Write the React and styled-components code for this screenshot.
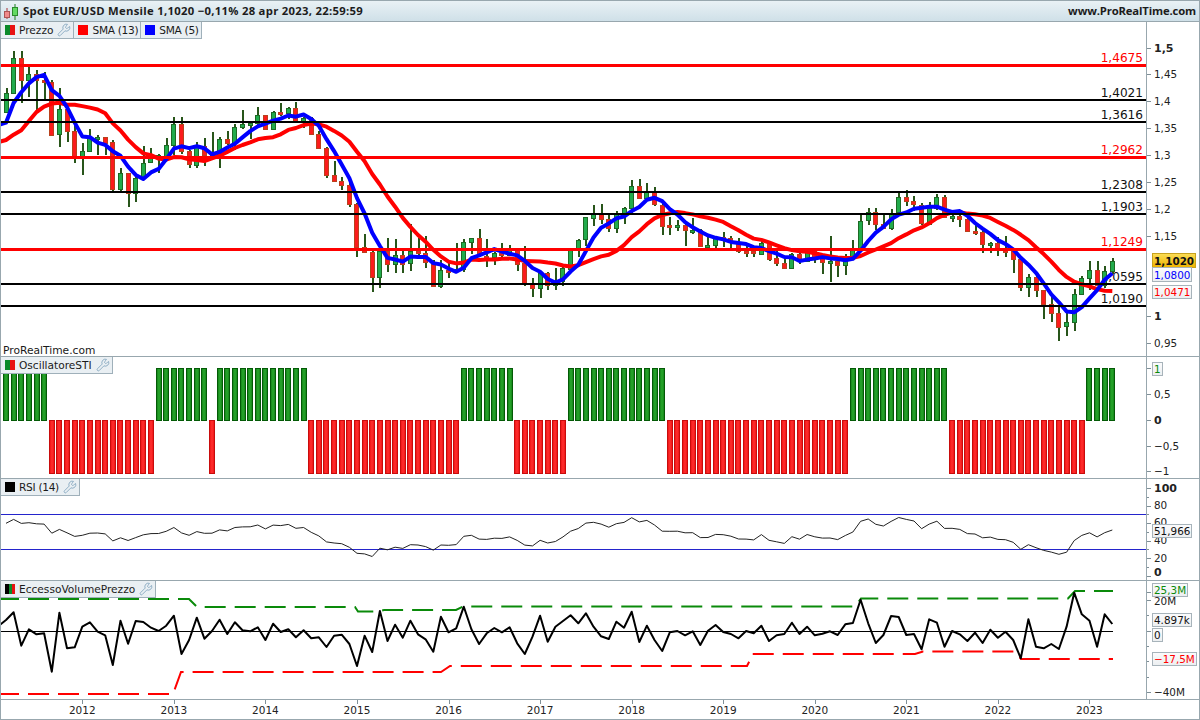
import React from "react";
import styled, { createGlobalStyle } from "styled-components";
import { Wrench } from "lucide-react";

const GlobalStyle = createGlobalStyle`
  html, body { margin: 0; padding: 0; background: #fff; overflow: hidden; }
  #root { width: 1200px; height: 720px; }
`;

const FONT = `"DejaVu Sans", "Liberation Sans", sans-serif`;
const TITLE_FONT = `"Open Sans", "DejaVu Sans", sans-serif`;
const BORDER = "#98a7ae";

/* ---------- market data (monthly, Mar 2011 → Apr 2023) ---------- */
const PRIOR = [1.28, 1.267, 1.325, 1.323, 1.415, 1.403, 1.426, 1.434, 1.464, 1.472, 1.5, 1.432,
  1.3866, 1.363, 1.351, 1.3295, 1.227, 1.2235, 1.305, 1.268, 1.363, 1.394, 1.298, 1.338, 1.369, 1.38];
const OHLC = [
  [1.4158,1.425,1.386],[1.4807,1.494,1.415],[1.439,1.494,1.397],[1.4502,1.47,1.407],[1.4394,1.458,1.384],[1.4365,1.455,1.405],[1.3387,1.439,1.336],[1.3855,1.425,1.315],[1.3445,1.387,1.324],[1.2961,1.355,1.286],
  [1.308,1.323,1.262],[1.3315,1.349,1.306],[1.3342,1.338,1.3],[1.3237,1.328,1.3],[1.2367,1.328,1.233],[1.2667,1.275,1.229],[1.23,1.239,1.204],[1.2578,1.262,1.213],[1.2859,1.317,1.256],[1.2977,1.313,1.288],[1.2991,1.301,1.266],[1.3193,1.331,1.293],
  [1.3578,1.371,1.3],[1.3067,1.371,1.302],[1.2817,1.31,1.275],[1.3168,1.324,1.275],[1.2996,1.331,1.279],[1.3008,1.342,1.295],[1.3301,1.334,1.275],[1.3222,1.345,1.319],[1.3525,1.357,1.31],[1.3582,1.383,1.348],[1.3589,1.36,1.329],[1.3743,1.389,1.353],
  [1.3486,1.374,1.348],[1.3802,1.382,1.348],[1.3769,1.396,1.373],[1.387,1.39,1.367],[1.3633,1.399,1.359],[1.3692,1.37,1.35],[1.3388,1.37,1.337],[1.3133,1.344,1.313],[1.2628,1.314,1.257],[1.2524,1.289,1.25],[1.2451,1.26,1.235],[1.2097,1.257,1.203],
  [1.129,1.21,1.11],[1.1197,1.153,1.126],[1.0731,1.124,1.046],[1.1222,1.129,1.052],[1.0986,1.146,1.082],[1.1146,1.144,1.081],[1.0985,1.122,1.081],[1.1211,1.171,1.085],[1.1177,1.146,1.109],[1.1003,1.149,1.089],[1.0565,1.104,1.056],[1.0862,1.105,1.052],
  [1.0831,1.099,1.071],[1.0873,1.137,1.081],[1.138,1.144,1.082],[1.1453,1.146,1.115],[1.113,1.162,1.11],[1.1105,1.143,1.091],[1.1175,1.119,1.095],[1.1157,1.136,1.105],[1.1241,1.132,1.112],[1.0984,1.124,1.085],[1.0591,1.13,1.057],[1.0517,1.071,1.035],
  [1.0798,1.082,1.034],[1.0574,1.083,1.049],[1.0652,1.09,1.049],[1.0895,1.095,1.057],[1.1241,1.126,1.084],[1.1426,1.144,1.111],[1.1842,1.185,1.131],[1.191,1.207,1.168],[1.1813,1.209,1.172],[1.1646,1.188,1.157],[1.1901,1.196,1.155],[1.2005,1.203,1.172],
  [1.2414,1.254,1.192],[1.2193,1.256,1.219],[1.2324,1.247,1.215],[1.2079,1.241,1.205],[1.1692,1.21,1.151],[1.1684,1.185,1.151],[1.169,1.179,1.158],[1.16,1.173,1.13],[1.1604,1.182,1.153],[1.1313,1.163,1.13],[1.1317,1.15,1.121],[1.1466,1.148,1.127],
  [1.1447,1.157,1.129],[1.1371,1.149,1.123],[1.1217,1.145,1.118],[1.1215,1.133,1.111],[1.117,1.126,1.111],[1.137,1.141,1.116],[1.1077,1.128,1.102],[1.0991,1.125,1.093],[1.0899,1.111,1.088],[1.1151,1.118,1.088],[1.1018,1.118,1.098],[1.1212,1.124,1.103],
  [1.1093,1.124,1.1],[1.1027,1.11,1.078],[1.103,1.15,1.064],[1.0954,1.102,1.073],[1.11,1.115,1.077],[1.1234,1.142,1.11],[1.1778,1.191,1.119],[1.1936,1.201,1.17],[1.172,1.201,1.161],[1.1646,1.188,1.162],[1.193,1.2,1.16],[1.2216,1.231,1.193],
  [1.2136,1.235,1.205],[1.2075,1.224,1.195],[1.1731,1.211,1.17],[1.202,1.212,1.17],[1.2227,1.227,1.198],[1.1858,1.225,1.185],[1.1869,1.189,1.175],[1.1809,1.191,1.166],[1.158,1.191,1.156],[1.1559,1.169,1.152],[1.1338,1.161,1.118],[1.1372,1.138,1.118],
  [1.1235,1.148,1.112],[1.1218,1.15,1.11],[1.1067,1.118,1.08],[1.0545,1.108,1.047],[1.0732,1.079,1.035],[1.0483,1.077,1.036],[1.0225,1.049,.995],[1.0055,1.037,.99],[.9802,1.02,.954],[.9884,1.009,.963],[1.0406,1.05,.973],[1.0705,1.074,1.039],
  [1.0863,1.103,1.048],[1.0577,1.103,1.058],[1.0839,1.093,1.052],[1.102,1.108,1.079],
];
const CLOSES = [...PRIOR, ...OHLC.map((r) => r[0])];
const OFFSET = PRIOR.length;

const monthX = (i) => 6 + 7.63 * i;
const priceY = (p) => 47.5 + (1.5 - p) * 537.5;
const rsiY = (v) => 575.5 - 0.875 * v;

const sma = (n) => {
  const pts = [];
  for (let k = OFFSET - 1; k < CLOSES.length; k++) {
    const avg = CLOSES.slice(k - n + 1, k + 1).reduce((a, b) => a + b, 0) / n;
    pts.push(`${monthX(k - OFFSET).toFixed(1)},${priceY(avg).toFixed(1)}`);
  }
  return pts.join(" ");
};

const rsiPoints = () => {
  let up = 0, down = 0;
  const pts = [];
  for (let k = 1; k < CLOSES.length; k++) {
    const d = CLOSES[k] - CLOSES[k - 1];
    const u = Math.max(d, 0), l = Math.max(-d, 0);
    if (k <= 14) { up += u / 14; down += l / 14; }
    else { up = (up * 13 + u) / 14; down = (down * 13 + l) / 14; }
    if (k >= OFFSET) {
      const v = 100 - 100 / (1 + up / (down || 1e-6));
      pts.push(`${monthX(k - OFFSET).toFixed(1)},${rsiY(v).toFixed(1)}`);
    }
  }
  return pts.join(" ");
};

const LEVELS = [
  ["1,4675", 1.4675, true], ["1,4021", 1.4021], ["1,3616", 1.3616], ["1,2962", 1.2962, true],
  ["1,2308", 1.2308], ["1,1903", 1.1903], ["1,1249", 1.1249, true], ["1,0595", 1.0595], ["1,0190", 1.019],
];

/* oscillator sign runs: [firstIndex, lastIndex, up] */
const OSC = [[0,5,1],[6,19,0],[20,26,1],[27,27,0],[28,39,1],[40,59,0],[60,66,1],[67,73,0],[74,86,1],[87,110,0],[111,123,1],[124,141,0],[142,145,1]];

/* volume excess line: page y for each month, from Feb 2011 */
const z5 = [288,270,247,347,298,313,310,425,248,355,352,290,277,305,316,405,272,341,273,276,293,303,287,257,372,330,263,326,303,269,312,277,301,304,292,330,281,306,298,322,301,325,322,351,317,314,342,408,317,366,243,333,284];
const z7 = [383,332,373,388,425,320,367,355,290,358,402,370,354,367,352,400,432,380,317,395,350,333,316,340,310,350,379,387,335,353,305,396,347,390,423,367,363,376,364,405,362,345,366,372,385,363,370,347,393,376,372,338,372];
const z11 = [125,151,146,139,150,118,114,44,115,174,150,93,96,150,147,193,103,113,185,138,148,168,143,174,134,158];
const z6 = [845,870,925,808,890,895,882,897,830,728,793,812,890,793,822];
const VOL = [...z5.map((v) => 530 + v / 3), ...z7.map((v) => 510 + v / 3), ...z11.map((v) => 585 + v / 3), ...z6.map((v) => 350 + v / 3)]
  .map((y, i) => `${monthX(i - 1).toFixed(1)},${y.toFixed(1)}`).join(" ");

const GREEN_BAND = "-2,599 189,599 197,607 355,607 358,611.5 378,611.5 384,610 456,610 463,606.5 855,606.5 861,598.5 1068,598.5 1075,591 1113,591";
const RED_BAND = "-2,694 173,694 181,672 441,672 450,666 747,666 750,660 752,654 915,654 923,651.5 1015,651.5 1021,659 1113,659";

const YEARS = [2012,2013,2014,2015,2016,2017,2018,2019,2020,2021,2022,2023];

const PRICE_TICKS = [["1,5",1.5,1],["1,45",1.45],["1,4",1.4],["1,35",1.35],["1,3",1.3],["1,25",1.25],["1,2",1.2],["1,15",1.15],["1",1,1],["0,95",.95]];

/* ---------- layout ---------- */
const Window = styled.div`
  box-sizing: border-box;
  width: 1200px;
  height: 720px;
  display: flex;
  flex-direction: column;
  border: 1px solid ${BORDER};
  background: #fff;
  font-family: ${FONT};
  color: #111;
`;
const TitleBar = styled.header`
  flex: 0 0 21px;
  box-sizing: border-box;
  display: flex;
  align-items: center;
  justify-content: space-between;
  padding: 0 3px 1px 2px;
  background: linear-gradient(#e9f1f5, #cfe0e8);
  border-bottom: 1px solid ${BORDER};
`;
const TitleLeft = styled.div`
  display: flex;
  align-items: center;
  gap: 4px;
`;
const TitleText = styled.span`
  font-family: ${TITLE_FONT};
  font-size: 11.3px;
  font-weight: 700;
  letter-spacing: ${(p) => p.$spacing};
  color: #1c1c1c;
  white-space: nowrap;
`;
const Panel = styled.section`
  position: relative;
  flex: 0 0 ${(p) => p.$height}px;
  box-sizing: border-box;
  display: flex;
  border-bottom: 1px solid ${BORDER};
  overflow: hidden;
`;
const Plot = styled.div`
  flex: 0 0 1145px;
  display: flex;
`;
const Scale = styled.div`
  flex: 1;
  display: flex;
  border-left: 1px solid ${BORDER};
`;
const Chart = styled.svg`
  display: block;
  width: 100%;
  height: 100%;
`;
const Legend = styled.div`
  position: absolute;
  left: 0;
  top: 0;
  display: flex;
  z-index: 2;
`;
const LegendItem = styled.div`
  box-sizing: border-box;
  height: 17px;
  display: flex;
  align-items: center;
  gap: 4px;
  padding: 0 2px 0 4px;
  background: #e9eff3;
  border-right: 1px solid #9fb0ba;
  border-bottom: 1px solid #9fb0ba;
  font-size: 10.6px;
  letter-spacing: ${(p) => (p.$tight ? "-0.3px" : "0")};
  color: #1a1a1a;
  white-space: nowrap;
`;
const Swatch = styled.span`
  flex: 0 0 10px;
  height: 10px;
  background: ${(p) => p.$fill};
`;
const ProLabel = styled.div`
  position: absolute;
  left: 2px;
  bottom: -1px;
  font-size: 10.7px;
  line-height: 13px;
  color: #1a1a1a;
`;
const Tag = styled.div`
  position: absolute;
  top: ${(p) => p.$top}px;
  left: 1151px;
  box-sizing: border-box;
  height: ${(p) => p.$height || 14}px;
  padding: 0 1px;
  display: flex;
  align-items: center;
  font-size: 10.4px;
  font-weight: ${(p) => (p.$gold ? 700 : 400)};
  color: ${(p) => p.$color || "#111"};
  background: ${(p) => (p.$gold ? "linear-gradient(#fbdc55, #efb400)" : "linear-gradient(#fbfbfc, #eceff1)")};
  border: 1px solid ${(p) => (p.$gold ? "#c8a21e" : "#a7b3ba")};
  white-space: nowrap;
`;
const TimeAxis = styled.footer`
  flex: 0 0 19px;
  display: flex;
`;

/* ---------- svg parts ---------- */
const LevelText = styled.text`
  font-family: ${FONT};
  font-size: 12.1px;
  text-anchor: end;
  fill: ${(p) => (p.$red ? "#f00" : "#111")};
`;
const AxisText = styled.text`
  font-family: ${FONT};
  font-size: ${(p) => (p.$bold ? 11 : 10.4)}px;
  font-weight: ${(p) => (p.$bold ? 700 : 400)};
  fill: #222;
`;
const YearText = styled.text`
  font-family: ${FONT};
  font-size: 10.5px;
  text-anchor: middle;
  fill: #222;
`;

const Candles = () => (
  <g shapeRendering="crispEdges">
    {OHLC.map(([c, h, l], i) => {
      const o = CLOSES[OFFSET + i - 1];
      const up = c >= o;
      const left = Math.round(monthX(i) - 2.5);
      const top = priceY(Math.max(o, c));
      const bottom = priceY(Math.min(o, c));
      return (
        <g key={i}>
          <rect x={left + 1.5} y={priceY(Math.max(h, o, c))} width="2" height={priceY(Math.min(l, o, c)) - priceY(Math.max(h, o, c))} fill="#28551a" />
          <rect x={left + 0.5} y={Math.round(top) + 0.5} width="4" height={Math.max(Math.round(bottom - top), 2)} fill={up ? "#22ab4c" : "#fb1c1c"} stroke={up ? "#1d6a24" : "#b9411c"} />
        </g>
      );
    })}
  </g>
);

const Levels = () => (
  <g shapeRendering="crispEdges">
    {LEVELS.map(([, p, red]) => {
      const y = Math.round(priceY(p));
      return <rect key={p} x="0" y={y - 1} width="1146" height={red ? 3 : 2} fill={red ? "#f00" : "#000"} />;
    })}
  </g>
);

const Ticks = ({ ys, minor = [] }) => (
  <g shapeRendering="crispEdges" fill="#7f8f97">
    {ys.map((y) => <rect key={y} x="1147" y={Math.round(y)} width="4" height="1" />)}
    {minor.map((y) => <rect key={y} x="1147" y={Math.round(y)} width="2" height="1" />)}
  </g>
);

const Tool = () => <Wrench size={14} color="#6f97b5" strokeWidth={1.25} />;
const PV = "linear-gradient(90deg, #0a8a2a 50%, #e81212 50%)";

const Logo = () => (
  <svg width="16" height="18" viewBox="0 0 16 18">
    <rect x="3.5" y="6" width="1" height="11" fill="#a33" />
    <rect x="1.5" y="9.5" width="5" height="6" fill="#f08a8a" stroke="#a55" />
    <rect x="11.5" y="2" width="1" height="16" fill="#1d7a1d" />
    <rect x="9.5" y="5.5" width="5" height="8" fill="#62da62" stroke="#2b8a2b" />
  </svg>
);

const Bars = () => (
  <>
    <defs>
      <linearGradient id="barG" x1="0" x2="1" y1="0" y2="0">
        <stop offset="0" stopColor="#127d16" /><stop offset=".5" stopColor="#28a82c" /><stop offset="1" stopColor="#127d16" />
      </linearGradient>
      <linearGradient id="barR" x1="0" x2="1" y1="0" y2="0">
        <stop offset="0" stopColor="#ee1010" /><stop offset=".5" stopColor="#ff3030" /><stop offset="1" stopColor="#ee1010" />
      </linearGradient>
    </defs>
    <g shapeRendering="crispEdges">
      {OSC.flatMap(([a, b, up]) =>
        Array.from({ length: b - a + 1 }, (_, k) => {
          const i = a + k;
          const x = Math.round(monthX(i) - 3) + 0.5;
          return up ? (
            <rect key={i} x={x} y="368.5" width="5" height="52" fill="url(#barG)" stroke="#035a06" />
          ) : (
            <rect key={i} x={x} y="420.5" width="5" height="53" fill="url(#barR)" stroke="#c80c0c" />
          );
        })
      )}
    </g>
  </>
);

export default function App() {
  return (
    <>
      <GlobalStyle />
      <Window>
        <TitleBar>
          <TitleLeft>
            <Logo />
            <TitleText $spacing="0.29px">Spot EUR/USD Mensile 1,1020 −0,11% 28 apr 2023, 22:59:59</TitleText>
          </TitleLeft>
          <TitleText $spacing="-0.15px">www.ProRealTime.com</TitleText>
        </TitleBar>

        {/* price */}
        <Panel $height={335}>
          <Plot>
            <Chart viewBox="1 22 1145 334">
              {LEVELS.map(([t, p, red]) => (
                <LevelText key={t} x="1143" y={Math.round(priceY(p)) - 3} $red={red}>{t}</LevelText>
              ))}
              <Candles />
              <polyline points={sma(13)} fill="none" stroke="#f00" strokeWidth="4" strokeLinejoin="round" strokeLinecap="butt" />
              <polyline points={sma(5)} fill="none" stroke="#00f" strokeWidth="4" strokeLinejoin="round" strokeLinecap="butt" />
              <Levels />
            </Chart>
          </Plot>
          <Scale>
            <Chart viewBox="1147 22 52 334">
              <Ticks ys={PRICE_TICKS.map((t) => priceY(t[1]))} />
              {PRICE_TICKS.map(([t, p, b]) => (
                <AxisText key={t} x="1154" y={priceY(p) + 4} $bold={b}>{t}</AxisText>
              ))}
            </Chart>
          </Scale>
          <Legend>
            <LegendItem><Swatch $fill={PV} />Prezzo<Tool /></LegendItem>
            <LegendItem $tight><Swatch $fill="#f00" />SMA (13)</LegendItem>
            <LegendItem $tight><Swatch $fill="#00f" />SMA (5)</LegendItem>
          </Legend>
          <ProLabel>ProRealTime.com</ProLabel>
          <Tag $gold $top={231} $height={15}>1,1020</Tag>
          <Tag $color="#00f" $top={245} $height={15}>1,0800</Tag>
          <Tag $color="#f00" $top={263}>1,0471</Tag>
        </Panel>

        {/* oscillator */}
        <Panel $height={122}>
          <Plot>
            <Chart viewBox="1 357 1145 121"><Bars /></Chart>
          </Plot>
          <Scale>
            <Chart viewBox="1147 357 52 121">
              <Ticks ys={[368, 394, 420, 446, 471]} />
              <AxisText x="1154" y="398">0,5</AxisText>
              <AxisText x="1154" y="424" $bold>0</AxisText>
              <AxisText x="1154" y="450">−0,5</AxisText>
              <AxisText x="1154" y="475">−1</AxisText>
            </Chart>
          </Scale>
          <Legend>
            <LegendItem><Swatch $fill={PV} />OscillatoreSTI<Tool /></LegendItem>
          </Legend>
          <Tag $color="#0a8a0a" $top={5}>1</Tag>
        </Panel>

        {/* rsi */}
        <Panel $height={102}>
          <Plot>
            <Chart viewBox="1 479 1145 101">
              <g shapeRendering="crispEdges" fill="#2424cc">
                <rect x="0" y="514" width="1146" height="1" />
                <rect x="0" y="549" width="1146" height="1" />
              </g>
              <polyline points={rsiPoints()} fill="none" stroke="#222" strokeWidth="1" />
            </Chart>
          </Plot>
          <Scale>
            <Chart viewBox="1147 479 52 101">
              <Ticks ys={[rsiY(100), rsiY(80), rsiY(60), rsiY(40), rsiY(20), rsiY(0)]} minor={[rsiY(90), rsiY(70), rsiY(50), rsiY(30), rsiY(10)]} />
              <AxisText x="1154" y="492" $bold>100</AxisText>
              <AxisText x="1154" y="509">80</AxisText>
              <AxisText x="1154" y="526">60</AxisText>
              <AxisText x="1154" y="544">40</AxisText>
              <AxisText x="1154" y="562">20</AxisText>
              <AxisText x="1154" y="576" $bold>0</AxisText>
            </Chart>
          </Scale>
          <Legend>
            <LegendItem $tight><Swatch $fill="#000" />RSI (14)<Tool /></LegendItem>
          </Legend>
          <Tag $top={45}>51,966</Tag>
        </Panel>

        {/* volume */}
        <Panel $height={119}>
          <Plot>
            <Chart viewBox="1 581 1145 118">
              <rect x="0" y="630.5" width="1113" height="1.2" fill="#000" shapeRendering="crispEdges" />
              <polyline points={GREEN_BAND} fill="none" stroke="#0a8a0a" strokeWidth="2" strokeDasharray="21 9" />
              <polyline points={RED_BAND} fill="none" stroke="#f00" strokeWidth="2" strokeDasharray="21 9" />
              <polyline points={VOL} fill="none" stroke="#000" strokeWidth="2" strokeLinejoin="round" />
            </Chart>
          </Plot>
          <Scale>
            <Chart viewBox="1147 581 52 118">
              <Ticks ys={[592, 600, 631, 692]} minor={[615, 646, 661, 677]} />
              <AxisText x="1154" y="605">20M</AxisText>
              <AxisText x="1154" y="696">−40M</AxisText>
            </Chart>
          </Scale>
          <Legend>
            <LegendItem><Swatch $fill="linear-gradient(90deg, #000 40%, #0a8a2a 40%, #0a8a2a 70%, #e81212 70%)" />EccessoVolumePrezzo<Tool /></LegendItem>
          </Legend>
          <Tag $color="#0a8a0a" $top={2}>25,3M</Tag>
          <Tag $top={32}>4.897k</Tag>
          <Tag $top={47}>0</Tag>
          <Tag $color="#f00" $top={71}>−17,5M</Tag>
        </Panel>

        <TimeAxis>
          <Chart viewBox="1 700 1198 19">
            <g shapeRendering="crispEdges" fill="#7f8f97">
              {YEARS.map((y, k) => <rect key={y} x={Math.round(monthX(10 + 12 * k))} y="700" width="1" height="4" />)}
            </g>
            {YEARS.map((y, k) => <YearText key={y} x={monthX(10 + 12 * k)} y="714">{y}</YearText>)}
          </Chart>
        </TimeAxis>
      </Window>
    </>
  );
}
